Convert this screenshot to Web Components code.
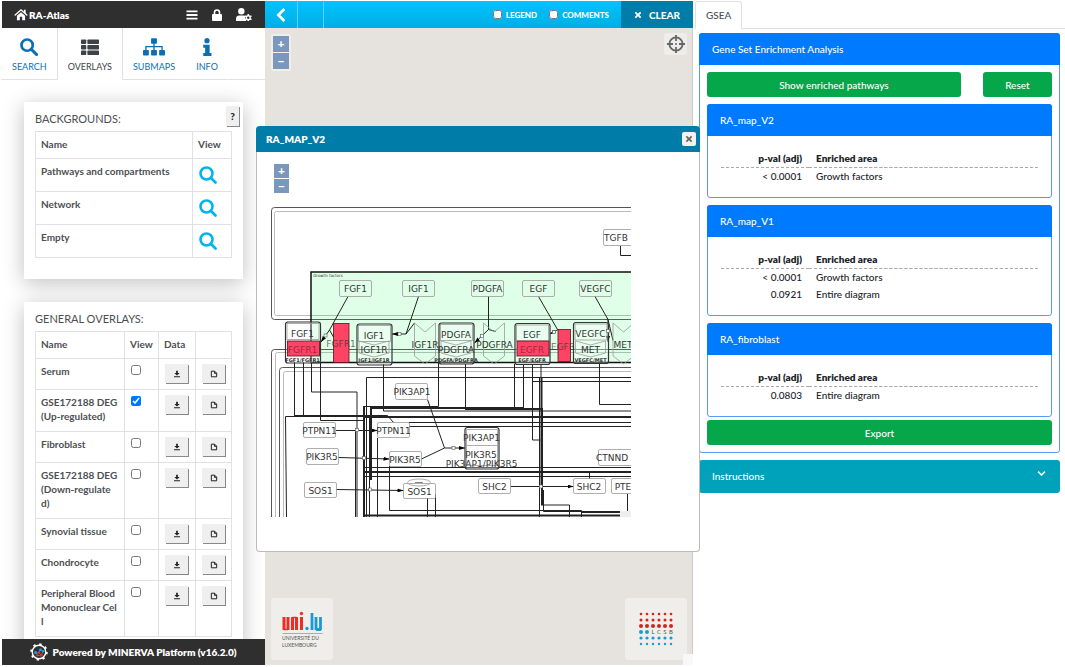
<!DOCTYPE html>
<html lang="en">
<head>
<meta charset="utf-8">
<meta name="viewport" content="width=device-width, initial-scale=1">
<title>RA-Atlas</title>
<style>
  body {
    margin: 0;
    background: #fff;
    font-family: Lato, "Liberation Sans", sans-serif;
    font-size: 10px;
    line-height: 14px;
    color: #212529;
  }
</style>
</head>
<body>
<atlas-app>
  <atlas-sidebar slot="sidebar">
    <nav-tab icon="search">SEARCH</nav-tab>
    <nav-tab icon="list" active>OVERLAYS</nav-tab>
    <nav-tab icon="tree">SUBMAPS</nav-tab>
    <nav-tab icon="info">INFO</nav-tab>
    <overlay-card slot="content" heading="BACKGROUNDS:" help>
      <background-table></background-table>
    </overlay-card>
    <overlay-card slot="content" heading="GENERAL OVERLAYS:">
      <overlay-table></overlay-table>
    </overlay-card>
  </atlas-sidebar>
  <atlas-map slot="map">
    <map-window heading="RA_MAP_V2">
      <pathway-diagram></pathway-diagram>
    </map-window>
  </atlas-map>
  <gsea-panel slot="plugin">
    <enrichment-card heading="RA_map_V2" rows='[["&lt; 0.0001","Growth factors"]]'></enrichment-card>
    <enrichment-card heading="RA_map_V1" rows='[["&lt; 0.0001","Growth factors"],["0.0921","Entire diagram"]]'></enrichment-card>
    <enrichment-card heading="RA_fibroblast" rows='[["0.0803","Entire diagram"]]'></enrichment-card>
  </gsea-panel>
</atlas-app>

<script>
const icons = {
  home: '<svg viewBox="0 0 24 22"><path d="M2 12 12 3l10 9" fill="none" stroke="currentColor" stroke-width="2.4" stroke-linecap="round"/><path d="M17 3h3v7l-3-3zM5 13l7-6 7 6v8h-5v-6h-4v6H5z" fill="currentColor"/></svg>',
  bars: '<svg viewBox="0 0 24 24"><path d="M1 3h22v3.600H1zM1 10.200h22v3.600H1zM1 17.400h22V21H1z" fill="currentColor"/></svg>',
  lock: '<svg viewBox="0 0 24 24"><path d="M7 11V7a5 5 0 0 1 10 0v4" fill="none" stroke="currentColor" stroke-width="3.200"/><rect x="2" y="10" width="20" height="14" rx="2" fill="currentColor"/></svg>',
  user: '<svg viewBox="0 0 30 24"><circle cx="10" cy="6" r="6" fill="currentColor"/><path d="M0 24v-4c0-4 3-6 6-6h8c1 0 2 0 3 1v6l3 3z" fill="currentColor"/><circle cx="23" cy="18" r="3.600" fill="none" stroke="currentColor" stroke-width="2.600"/><path d="M23 11v3m0 8v3m-6-10.500 2.500 1.500m7 4 2.500 1.500m0-7-2.500 1.500m-7 4L17 21.500" stroke="currentColor" stroke-width="2.800"/></svg>',
  search: '<svg viewBox="0 0 24 24"><circle cx="9.500" cy="9.500" r="7.500" fill="none" stroke="currentColor" stroke-width="3.600"/><path d="m15 15 7 7" stroke="currentColor" stroke-width="4.200" stroke-linecap="round"/></svg>',
  zoom: '<svg viewBox="0 0 24 24"><circle cx="10" cy="10" r="8" fill="none" stroke="currentColor" stroke-width="3.400"/><path d="m16 16 6 6" stroke="currentColor" stroke-width="3.600" stroke-linecap="round"/></svg>',
  list: '<svg viewBox="0 0 24 24"><g fill="currentColor"><rect y="2" width="7" height="6" rx="1"/><rect x="8.500" y="2" width="15.500" height="6" rx="1"/><rect y="9.300" width="7" height="6" rx="1"/><rect x="8.500" y="9.300" width="15.500" height="6" rx="1"/><rect y="16.600" width="7" height="6" rx="1"/><rect x="8.500" y="16.600" width="15.500" height="6" rx="1"/></g></svg>',
  tree: '<svg viewBox="0 0 30 24"><g fill="currentColor"><rect x="11" y="0" width="8" height="7.500" rx="1"/><rect x="0" y="16" width="8" height="7.500" rx="1"/><rect x="11" y="16" width="8" height="7.500" rx="1"/><rect x="22" y="16" width="8" height="7.500" rx="1"/></g><path d="M15 7v10M4 17v-5.500h22V17" fill="none" stroke="currentColor" stroke-width="1.800"/></svg>',
  info: '<svg viewBox="0 0 24 24"><circle cx="12" cy="3.500" r="3.500" fill="currentColor"/><path d="M7 9h8.500v11H18v4H7v-4h2.500v-7H7z" fill="currentColor"/></svg>',
  download: '<svg viewBox="0 0 12 12"><path d="M4.700 1h2.600v3.500H10L6 8.400 2 4.500h2.700zM1.500 9.500h9V11h-9z" fill="currentColor"/></svg>',
  file: '<svg viewBox="0 0 12 12"><path d="M2 1.800h5l3 3v5.400H2zM6.800 2v3H10" fill="none" stroke="currentColor" stroke-width="1.500"/></svg>',
  chevronLeft: '<svg viewBox="0 0 24 24"><path d="M17 3 8 12l9 9" fill="none" stroke="currentColor" stroke-width="4"/></svg>',
  chevronDown: '<svg viewBox="0 0 24 24"><path d="m3 7 9 9 9-9" fill="none" stroke="currentColor" stroke-width="4"/></svg>',
  cross: '<svg viewBox="0 0 12 12"><path d="m2 2 8 8m0-8-8 8" fill="none" stroke="currentColor" stroke-width="2.600"/></svg>',
  target: '<svg viewBox="0 0 24 24"><g fill="none" stroke="currentColor"><circle cx="12" cy="12" r="8.800" stroke-width="2.400"/><path d="M12 0v8m0 8v8M0 12h8m8 0h8" stroke-width="2.400"/></g><circle cx="12" cy="12" r="1.300" fill="currentColor"/></svg>',
  minerva: '<svg viewBox="0 0 24 24"><circle cx="12" cy="12" r="9" fill="none" stroke="#fff" stroke-width="1.800"/><circle cx="12" cy="12" r="10.500" fill="none" stroke="#fff" stroke-width="2.400" stroke-dasharray="3.200 5.047"/><path d="m7 14 4-1 3-4 4 2M9 16l5 1 3-5" stroke="#888" fill="none"/><circle cx="7.500" cy="12.500" r="2" fill="#1ba0e0"/><circle cx="14" cy="9" r="2" fill="#1ba0e0"/><circle cx="17.500" cy="11" r="1.700" fill="#1ba0e0"/><circle cx="12" cy="13" r="1.700" fill="#e53030"/><circle cx="15" cy="16" r="2" fill="#e53030"/><circle cx="9.500" cy="16.500" r="1.500" fill="#e53030"/></svg>',
};

const baseStyle = /*css*/ `
  * { box-sizing: border-box; }
  svg { display: block; }
  button { font: inherit; color: inherit; margin: 0; padding: 0; border: 0; background: none; cursor: pointer; }
  a { color: inherit; text-decoration: none; }
`;

class AtlasElement extends HTMLElement {
  constructor() {
    super();
    this.attachShadow({ mode: "open" });
  }

  connectedCallback() {
    const template = document.createElement("template");
    template.innerHTML = `<style>${baseStyle}</style>${this.render()}`;
    this.shadowRoot.replaceChildren(template.content.cloneNode(true));
  }

  render() {
    return "<slot></slot>";
  }
}

class AtlasApp extends AtlasElement {
  render() {
    return /*html*/ `
      <style>
        :host {
          display: grid;
          grid-template-columns: 263px minmax(0, 1fr) 372px;
          height: 100vh;
          box-sizing: border-box;
          padding: 1px 0 2px 2px;
          overflow: hidden;
        }
        ::slotted(*) { min-width: 0; min-height: 0; }
      </style>
      <slot name="sidebar"></slot>
      <slot name="map"></slot>
      <slot name="plugin"></slot>
    `;
  }
}

class AtlasSidebar extends AtlasElement {
  render() {
    return /*html*/ `
      <style>
        :host { display: flex; flex-direction: column; color: #4d4f53; }
        header, footer { display: flex; align-items: center; background: #2f2f2f; color: #fff; font-weight: 800; }
        header { height: 27px; flex: none; padding: 0 13px 0 12px; gap: 13px; }
        header a { display: flex; align-items: center; gap: 1px; margin-right: auto; }
        .home svg { width: 14px; height: 13px; }
        header button svg { height: 12px; width: 12px; }
        header button.user svg { width: 16px; height: 13px; }
        nav { display: flex; flex: none; height: 52px; }
        nav::after { content: ""; flex: 1; border-bottom: 1px solid #dee2e6; }
        main { flex: 1; min-height: 0; overflow-y: auto; scrollbar-width: none; padding: 22px 22px; }
        footer { height: 26px; flex: none; justify-content: center; gap: 4px; }
        footer svg { width: 18px; height: 18px; }
      </style>
      <header>
        <a href="#" class="home">${icons.home}<span>RA-Atlas</span></a>
        <button aria-label="Menu">${icons.bars}</button>
        <button aria-label="Log in">${icons.lock}</button>
        <button aria-label="Account" class="user">${icons.user}</button>
      </header>
      <nav><slot></slot></nav>
      <main><slot name="content"></slot></main>
      <footer>${icons.minerva}<span>Powered by MINERVA Platform (v16.2.0)</span></footer>
    `;
  }
}

class NavTab extends AtlasElement {
  render() {
    return /*html*/ `
      <style>
        :host {
          display: block;
          margin-left: -1px;
          color: #0d6fb3;
          font-size: 9px;
          border: solid transparent;
          border-width: 0 1px;
          border-bottom: 1px solid #dee2e6;
        }
        :host([active]) { color: #3d4247; border-color: #dee2e6; border-bottom-color: transparent; }
        a { display: flex; flex-direction: column; align-items: center; gap: 4px; padding: 10px 10px 0; }
        svg { height: 18px; width: 22px; }
      </style>
      <a href="#">${icons[this.getAttribute("icon")]}<slot></slot></a>
    `;
  }
}

class OverlayCard extends AtlasElement {
  render() {
    const help = this.hasAttribute("help") ? "<button>?</button>" : "";
    return /*html*/ `
      <style>
        :host {
          display: block;
          position: relative;
          margin-bottom: 23px;
          padding: 10px 11px 21px;
          background: #fff;
          box-shadow: 0 4px 20px rgba(0, 0, 0, .25);
        }
        h2 { margin: 0 0 5px; font-size: 11px; font-weight: 400; line-height: 14px; }
        button {
          position: absolute;
          top: 4px;
          right: 4px;
          width: 13px;
          height: 20px;
          background: #efefef;
          box-shadow: 1px 1px 0 #888;
          color: #222;
          font-weight: 900;
        }
      </style>
      <h2>${this.getAttribute("heading")}</h2>
      ${help}
      <slot></slot>
    `;
  }
}

const tableStyle = /*css*/ `
  :host { display: block; }
  table { width: 100%; border-collapse: collapse; table-layout: fixed; }
  th, td { border: 1px solid #dee2e6; padding: 5px 5px 8px; vertical-align: top; text-align: left; }
  thead th { height: 27px; padding-bottom: 6px; font-weight: 700; }
  tbody th { font-weight: 700; white-space: pre; }
`;

class BackgroundTable extends AtlasElement {
  render() {
    const rows = ["Pathways and compartments", "Network", "Empty"].map((name) => `
      <tr><th scope="row">${name}</th><td><button aria-label="View ${name}">${icons.zoom}</button></td></tr>`);
    return /*html*/ `
      <style>
        ${tableStyle}
        .view { width: 39px; }
        tbody th { height: 33px; }
        tbody td { padding: 7px 6px; }
        td button { color: #00b4f0; display: block; }
        td svg { width: 18px; height: 18px; }
      </style>
      <table>
        <thead><tr><th>Name</th><th class="view">View</th></tr></thead>
        <tbody>${rows.join("")}</tbody>
      </table>
    `;
  }
}

class OverlayTable extends AtlasElement {
  render() {
    const overlays = [
      ["Serum"],
      ["GSE172188 DEG\n(Up-regulated)", true],
      ["Fibroblast"],
      ["GSE172188 DEG\n(Down-regulate\nd)"],
      ["Synovial tissue"],
      ["Chondrocyte"],
      ["Peripheral Blood\nMononuclear Cel\nl"],
    ];
    const rows = overlays.map(([name, checked], i) => `
      <tr>
        <th scope="row"><label for="overlay-${i}">${name}</label></th>
        <td><input type="checkbox" id="overlay-${i}" ${checked ? "checked" : ""}></td>
        <td><button aria-label="Download">${icons.download}</button></td>
        <td><button aria-label="Open file">${icons.file}</button></td>
      </tr>`);
    return /*html*/ `
      <style>
        ${tableStyle}
        .view { width: 34px; }
        .data { width: 37px; }
        .file { width: 36px; }
        tbody th { height: 31px; }
        thead th, tbody td { padding-right: 0; }
        tbody td { padding: 5px 0 0 6px; }
        input { display: block; width: 10px; height: 10px; margin: 1px 0 0; }
        td button {
          display: flex;
          justify-content: center;
          align-items: center;
          width: 23px;
          height: 19px;
          background: #efefef;
          box-shadow: 1px 1px 0 #888;
          color: #222;
        }
        td svg { width: 8px; height: 8px; }
      </style>
      <table>
        <thead><tr><th>Name</th><th class="view">View</th><th class="data">Data</th><th class="file"></th></tr></thead>
        <tbody>${rows.join("")}</tbody>
      </table>
    `;
  }
}

class ZoomControl extends AtlasElement {
  render() {
    return /*html*/ `
      <style>
        :host { display: grid; gap: 1px; width: 20px; }
        button { height: var(--zoom-size, 16px); background: #7b98bc; color: #fff; font-weight: 900; font-size: 12px; line-height: 14px; }
      </style>
      <button aria-label="Zoom in">+</button>
      <button aria-label="Zoom out">−</button>
    `;
  }
}

class AtlasMap extends AtlasElement {
  dots() {
    const sizes = [1.3, 1.5, 2, 2, 1.6, 1.2];
    let out = "";
    sizes.forEach((r, row) => {
      for (let col = 0; col < (row === 3 ? 2 : 6); col++) {
        out += `<circle cx="${3 + col * 6}" cy="${3 + row * 6}" r="${r}" fill="${row < 3 ? "#d2251f" : "#1c9ad6"}"/>`;
      }
    });
    return out;
  }

  render() {
    return /*html*/ `
      <style>
        :host { display: flex; flex-direction: column; position: relative; z-index: 1; }
        header {
          display: flex;
          flex: none;
          height: 27px;
          background: linear-gradient(#00c3fb, #00aee6);
          color: #fff;
          font-weight: 900;
          font-size: 8px;
        }
        header > * { display: flex; align-items: center; justify-content: center; }
        .back { width: 33px; border-right: 1px solid #5fd3f7; }
        .back svg { width: 16px; height: 16px; }
        .blank { width: 26px; border-right: 1px solid #5fd3f7; margin-right: auto; }
        label { gap: 4px; margin-right: 12px; }
        input { width: 9px; height: 9px; margin: 0; }
        .clear { width: 72px; gap: 7px; background: #007ca8; font-size: 10px; }
        .clear svg { width: 8px; height: 8px; }
        .canvas {
          flex: 1;
          display: grid;
          grid-template: auto auto / auto auto;
          align-content: space-between;
          justify-content: space-between;
          padding: 5px 5px 5px 6px;
          background: #e6e3df;
          border-right: 1px solid #ccc;
        }
        .zoom { padding: 2px; margin-top: 1px; background: #f0efed; border-radius: 2px; justify-self: start; }
        .locate { width: 23px; height: 22px; justify-self: end; background: #efedea; border-radius: 2px; color: #666; }
        .locate svg { width: 18px; height: 18px; margin: auto; }
        .logo { display: flex; width: 62px; height: 62px; background: #f0eeea; border-radius: 3px; align-items: center; justify-content: center; }
        .logo svg { width: 42px; height: 42px; }
        .corner { position: absolute; right: 0; bottom: 0; width: 10px; height: 11px; background: #f8f8f8; }
      </style>
      <header>
        <button class="back" aria-label="Back">${icons.chevronLeft}</button>
        <span class="blank"></span>
        <label><input type="checkbox">LEGEND</label>
        <label><input type="checkbox">COMMENTS</label>
        <button class="clear">${icons.cross}CLEAR</button>
      </header>
      <div class="canvas">
        <zoom-control class="zoom"></zoom-control>
        <button class="locate" aria-label="Center map">${icons.target}</button>
        <a href="#" class="logo" aria-label="Université du Luxembourg">
          <svg viewBox="0 0 42 42">
            <g fill="none" stroke="#ee2e24" stroke-width="3">
              <path d="M3 9v13M7 9v13M11.500 9v13M15.500 9v13M20.500 9v13"/>
              <path d="M3 21.500h4M11.500 9.500h4" stroke-width="1.500"/>
            </g>
            <circle cx="20.500" cy="5.500" r="1.700" fill="#ee2e24"/>
            <path d="M31 5v17M35 9v13M39.500 9v13M35 21.500h5" fill="none" stroke="#1c9ad6" stroke-width="2.800"/>
            <circle cx="26" cy="20.500" r="1.700" fill="#1c9ad6"/>
            <path d="M1.500 25.500h40" stroke="#999" stroke-width=".8"/>
            <text x="1" y="32" font-size="5" fill="#555">UNIVERSITÉ DU</text>
            <text x="1" y="39" font-size="5" fill="#555">LUXEMBOURG</text>
          </svg>
        </a>
        <a href="#" class="logo" aria-label="LCSB">
          <svg viewBox="-3 -3 42 42">${this.dots()}
            <g font-size="6" text-anchor="middle" fill="#555"><text x="15" y="23">L</text><text x="21" y="23">C</text><text x="27" y="23">S</text><text x="33" y="23">B</text></g>
          </svg>
        </a>
      </div>
      <span class="corner"></span>
      <slot></slot>
    `;
  }
}

class MapWindow extends AtlasElement {
  render() {
    return /*html*/ `
      <style>
        /* dragged over the map, wider than the map column */
        :host {
          position: absolute;
          top: 125px;
          left: -9px;
          right: -7px;
          box-sizing: border-box;
          border: 1px solid #bbb;
          border-top: 0;
          border-radius: 4px;
          background: #fff;
        }
        header {
          display: flex;
          align-items: center;
          justify-content: space-between;
          height: 26px;
          margin: 0 -1px;
          padding: 0 4px 0 10px;
          border-radius: 4px 4px 0 0;
          background: #007ca8;
          color: #fff;
          font-weight: 800;
        }
        header button { width: 14px; height: 14px; background: #f2f2f2; border-radius: 2px; color: #666; }
        header svg { width: 8px; height: 8px; margin: auto; }
        .body { padding: 12px 14px 34px; }
        zoom-control { --zoom-size: 14px; width: 15px; margin: 0 0 14px 3px; }
      </style>
      <header>${this.getAttribute("heading")}<button aria-label="Close">${icons.cross}</button></header>
      <div class="body">
        <zoom-control></zoom-control>
        <slot></slot>
      </div>
    `;
  }
}

class PathwayDiagram extends AtlasElement {
  node(x, y, w, h, name, cx = x + w / 2) {
    return `<rect class="node" x="${x}" y="${y}" width="${w}" height="${h}" rx="1.500"/>${this.label(cx, y + h / 2, name)}`;
  }

  label(x, y, name) {
    return `<text x="${x}" y="${y + 3.5}">${name}</text>`;
  }

  // outer frame plus one box for each member, and the small name below them
  complex(x, y, top, bottom, name, red) {
    const member = red
      ? `<rect class="red" x="${x + 2}" y="341" width="32" height="15"/>`
      : `<path class="node" d="M${x + 2} 341l15 4 15-4v12l-15 4-15-4z"/>`;
    return `
      <rect class="frame" x="${x}" y="${y}" width="35" height="41" rx="2.500"/>
      <rect class="node" x="${x + 1.5}" y="${y + 1.5}" width="32" height="16"/>
      ${member}
      ${this.label(x + 17, y + 11, top)}
      <g class="${red ? "dim" : ""}">${this.label(x + 17, 349, bottom)}</g>
      <text class="tiny" x="${x + 17}" y="362">${name}</text>`;
  }

  receptor(x, name, cx) {
    return `<path class="node" d="M${x} 323l10.500 9 10.500-9v33l-10.500 8-10.500-8z"/>${this.label(cx, 344, name)}`;
  }

  port(x, y) {
    return `<rect class="port" x="${x - 1.5}" y="${y - 1.5}" width="3" height="3"/>`;
  }

  render() {
    const members = [
      this.complex(285.5, 322, "FGF1", "FGFR1", "FGF1/FGFR1", true),
      this.complex(357, 324, "IGF1", "IGF1R", "IGF1/IGF1R"),
      this.complex(439, 323, "PDGFA", "PDGFRA", "PDGFA/PDGFRA"),
      this.complex(515, 323.5, "EGF", "EGFR", "EGF/EGFR", true),
      this.complex(573.5, 322.5, "VEGFC", "MET", "VEGFC/MET"),
      this.receptor(414.5, "IGF1R", 425),
      this.receptor(483.5, "PDGFRA", 494.5),
      this.receptor(613, "MET", 623),
    ];
    const nodes = [
      this.node(339.5, 280.5, 32, 16, "FGF1"),
      this.node(402.5, 280.5, 32, 16, "IGF1"),
      this.node(471.5, 280.5, 32, 16, "PDGFA"),
      this.node(522.5, 280.5, 32, 16, "EGF"),
      this.node(579.5, 280.5, 32, 16, "VEGFC"),
      this.node(603.5, 229.5, 40, 16, "TGFB", 616),
      this.node(395.5, 383.5, 32, 16, "PIK3AP1", 412),
      this.node(303.5, 422.5, 32, 15, "PTPN11"),
      this.node(377.5, 422.5, 32, 15, "PTPN11"),
      this.node(306.5, 448.5, 32, 16, "PIK3R5", 322),
      this.node(389.5, 451.5, 32, 15, "PIK3R5", 405),
      this.node(304.5, 482.5, 32, 15, "SOS1"),
      this.node(403.5, 483.5, 32, 15, "SOS1"),
      this.node(478.5, 478.5, 32, 15, "SHC2"),
      this.node(573.5, 478.5, 32, 15, "SHC2", 589),
      this.node(598.5, 449.5, 40, 16, "CTNND", 612),
      this.node(611.5, 478.5, 32, 15, "PTE", 623),
    ];
    const ports = [
      [325.5, 335.5], [399.5, 334], [482, 336], [554, 332], [608, 331], [357, 430],
      [364, 458], [370, 489.5], [453.5, 448], [541, 486.5],
    ].map(([x, y]) => this.port(x, y));
    return /*html*/ `
      <style>
        :host { display: block; }
        svg { width: 360px; max-width: 100%; height: auto; font-family: "DejaVu Sans", sans-serif; font-size: 9px; }
        text { text-anchor: middle; fill: #333; }
        .outer, .inner, .line, .bold, .arrow { fill: none; stroke: #222; }
        .outer { stroke: #555; }
        .inner { stroke: #bbb; }
        .bold { stroke-width: 2; }
        .area { fill: #0f4; fill-opacity: .12; stroke: #111; stroke-width: 1.500; }
        .node { fill: none; stroke: #999; stroke-width: .8; }
        .frame { fill: #fff; fill-opacity: .3; stroke: #333; stroke-width: 1.200; }
        .red { fill: #fe4365; stroke: #5c1020; stroke-width: .8; }
        .dim text { fill: #9c2c40; }
        .faded text { fill-opacity: .7; }
        .port { fill: #fff; stroke: #555; stroke-width: .6; }
        .arrow { marker-end: url(#head); }
        text.tiny { font-size: 5px; font-weight: 700; }
      </style>
      <svg viewBox="271 207 360 310" role="img" aria-label="Pathway diagram">
        <defs>
          <marker id="head" viewBox="0 0 6 4" refX="6" refY="2" markerWidth="6" markerHeight="4" orient="auto"><path d="M0 0 6 2 0 4z"/></marker>
        </defs>
        <rect class="outer" x="271.500" y="207.500" width="380" height="112" rx="3"/>
        <rect class="inner" x="274.500" y="211.500" width="380" height="104" rx="2"/>
        <rect class="outer" x="271.500" y="349.500" width="380" height="200" rx="3"/>
        <rect class="inner" x="275.500" y="352.500" width="380" height="200" rx="2"/>
        <rect class="outer" x="279.500" y="367.500" width="380" height="200" rx="3"/>
        <rect class="inner" x="283.500" y="371.500" width="380" height="200" rx="2"/>
        <rect class="area" x="311" y="272" width="340" height="90.500"/>
        <text x="328" y="277" font-size="4">Growth factors</text>

        <path class="line" d="M294.500 362v54M303.500 362v54M294.500 415.500h93l6 7M311.500 362v30h45.500v125M320.500 362v58.500h44"/>
        <path class="line" d="M366.500 517V377.500H631M383.500 364v47H631M438.500 362v44.500H364.500M465.500 364v45.500h76"/>
        <path class="line" d="M514.500 364v43.500M523.500 364v44.500M532.500 364v76h8M532.500 381.500H631M541 364v14M599.500 364v40.500H631"/>
        <path class="line" d="M285.500 416.500l1 100.500M285.500 416.500H631M409 422.500h222M409 426.500h222"/>
        <path class="line" d="M363 467.500h268M363 471.500h268M363 472.500h268M363 476.500h268M389.500 466v44.500h192v7M589.500 471v8"/>
        <path class="line" d="M377.500 438v79M427.500 498v19M435.500 494v23M355.500 430v87M369.500 416v101M620.500 246v9.500H631M627.500 494v18"/>
        <path class="line" d="M541 505h28.500v12M543.500 490v21.500H631M539.500 378v139"/>
        <path class="bold" d="M364 406v111M371 480v-72h152M541.500 378v110M465 409h77v96M363 515.500h268M582 512h49M363 417h268"/>

        <rect class="red" x="333.500" y="323.500" width="15.500" height="39"/>
        <rect class="red" x="558" y="329.500" width="12.500" height="32"/>
        <g class="faded">${this.label(341, 343, "FGFR1")}${this.label(563, 346, "EGFR")}</g>

        <path class="line" d="M348 296.500 329.500 330l4 7M418.500 296.500 406 334l8.500-11M488.500 296.500v33l7 2M538.500 296.500l19 33M595 296.500l13 23 5 21"/>
        <path class="arrow" d="M329.500 330 321 342"/>
        <path class="arrow" d="M406 334h-14"/>
        <path class="arrow" d="M488.500 329.500 474.500 343"/>
        <path class="arrow" d="M558 329.500l-8 4.500"/>
        <path class="arrow" d="M608 319v23"/>
        <path class="line" d="M427.500 399.500l17 48.500-23 11"/>
        <path class="arrow" d="M444.500 448h20.500"/>
        <path class="arrow" d="M336 430.500h41.500"/>
        <path class="arrow" d="M338.500 457.500l51 1.500"/>
        <path class="arrow" d="M336.500 489.500l67 1"/>
        <path class="arrow" d="M510.500 486.500h63"/>
        ${members.join("")}
        <ellipse cx="419" cy="482.500" rx="11.500" ry="3.500" fill="#fff" stroke="#999" stroke-width=".8"/>
        <path d="M415 482.500h8" stroke="#888"/>
        ${nodes.join("")}
        <rect class="frame" x="465" y="427.500" width="34" height="41.500" rx="2.500"/>
        <path class="node" d="M466.500 429.500h31v36h-31zM466.500 445.500h31"/>
        ${this.label(481.5, 437.5, "PIK3AP1")}${this.label(481, 454, "PIK3R5")}${this.label(481.5, 463.5, "PIK3AP1/PIK3R5")}
        ${ports.join("")}
        <rect x="620" y="511" width="11" height="6" fill="#eee"/>
      </svg>
    `;
  }
}

class GseaPanel extends AtlasElement {
  render() {
    return /*html*/ `
      <style>
        :host { display: block; font-weight: 500; }
        nav { display: flex; height: 28px; }
        nav::before { content: ""; width: 2px; }
        nav::after { content: ""; flex: 1; border-bottom: 1px solid #dee2e6; }
        nav a { padding: 6px 10px 0; border: 1px solid #dee2e6; border-bottom: 0; border-radius: 3px 3px 0 0; color: #495057; }
        main { display: grid; gap: 7px; padding: 4px 5px 0 6px; }
        section { border: 1px solid #5a9cf5; border-radius: 3px; }
        h2 { margin: -1px -1px 0; padding: 9px 13px 9px; background: #007bff; color: #fff; border-radius: 3px 3px 0 0; font-size: inherit; font-weight: inherit; }
        .body { display: grid; gap: 7px; padding: 7px; }
        .actions { display: grid; grid-template-columns: 11fr 3fr; gap: 22px; }
        .body button { height: 25px; background: #06a74b; color: #fff; border-radius: 3px; }
        .export { margin-top: -4px; }
        .instructions {
          display: flex;
          justify-content: space-between;
          padding: 9px 13px 10px;
          background: #00a1ba;
          color: #fff;
          border-radius: 3px;
        }
        .instructions svg { width: 11px; height: 9px; }
      </style>
      <nav><a href="#">GSEA</a></nav>
      <main>
        <section>
          <h2>Gene Set Enrichment Analysis</h2>
          <div class="body">
            <div class="actions"><button>Show enriched pathways</button><button>Reset</button></div>
            <slot></slot>
            <button class="export">Export</button>
          </div>
        </section>
        <button class="instructions">Instructions${icons.chevronDown}</button>
      </main>
    `;
  }
}

class EnrichmentCard extends AtlasElement {
  render() {
    const rows = JSON.parse(this.getAttribute("rows"))
      .map(([p, area]) => `<tr><td>${p.replace("<", "&lt;")}</td><td>${area}</td></tr>`);
    return /*html*/ `
      <style>
        :host { display: block; border: 1px solid #5a9cf5; border-radius: 3px; padding-bottom: 13px; }
        h3 { margin: -1px -1px 14px; padding: 9px 13px 9px; background: #007bff; color: #fff; border-radius: 3px 3px 0 0; font-size: inherit; font-weight: inherit; }
        table { width: calc(100% - 26px); margin: 0 13px; border-collapse: collapse; }
        th, td { height: 17px; padding: 0 7px; text-align: left; }
        th { font-weight: 800; border-bottom: 1px dashed #aaa; }
        th:first-child, td:first-child { width: 88px; text-align: right; }
      </style>
      <h3>${this.getAttribute("heading")}</h3>
      <table>
        <thead><tr><th>p-val (adj)</th><th>Enriched area</th></tr></thead>
        <tbody>${rows.join("")}</tbody>
      </table>
    `;
  }
}

customElements.define("atlas-app", AtlasApp);
customElements.define("atlas-sidebar", AtlasSidebar);
customElements.define("nav-tab", NavTab);
customElements.define("overlay-card", OverlayCard);
customElements.define("background-table", BackgroundTable);
customElements.define("overlay-table", OverlayTable);
customElements.define("zoom-control", ZoomControl);
customElements.define("atlas-map", AtlasMap);
customElements.define("map-window", MapWindow);
customElements.define("pathway-diagram", PathwayDiagram);
customElements.define("gsea-panel", GseaPanel);
customElements.define("enrichment-card", EnrichmentCard);
</script>
</body>
</html>
